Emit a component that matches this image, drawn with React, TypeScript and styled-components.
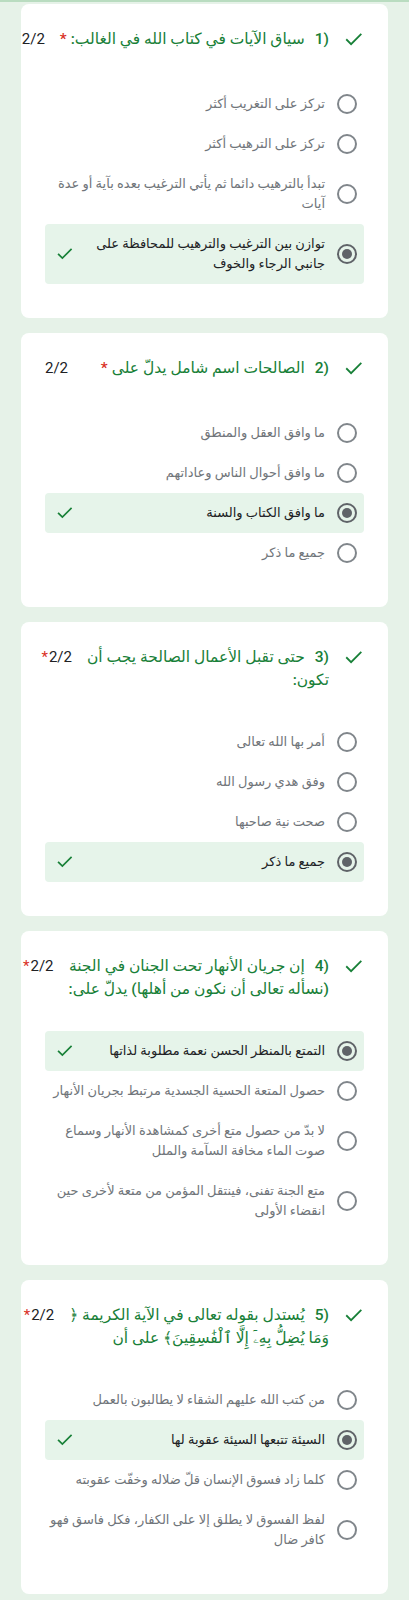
import React, {FC} from 'react';
import styled, {createGlobalStyle} from 'styled-components';

interface Option {
  lines: string[];
  selected?: boolean;
}

interface Question {
  n: number;
  title: string[];
  starWithPoints?: boolean;
  options: Option[];
}

const GlobalStyle = createGlobalStyle`
  html, body {
    margin: 0;
    padding: 0;
    background: #e6f2e8;
    overflow: hidden;
  }
  body {
    font-family: Roboto, "Noto Sans", "DejaVu Sans", sans-serif;
  }
`;

const Page = styled.div`
  direction: rtl;
  border-top: 2px solid #b9dcc0;
  padding: 2px 21px 0;
  display: flex;
  flex-direction: column;
  gap: 15px;
`;

const Card = styled.section`
  background: #fff;
  border-radius: 8px;
  padding: 24px 24px 34px;
`;

const Header = styled.div`
  display: flex;
  align-items: flex-start;
  gap: 15px;
  min-height: 26px;
  margin-bottom: 30px;
`;

const HeaderCheck = styled.svg`
  flex: none;
  width: 20px;
  height: 23px;
`;

const Title = styled.div`
  flex: 1;
  font-size: 15.5px;
  line-height: 23px;
  font-weight: 500;
  color: #188038;
  white-space: nowrap;
`;

const Num = styled.span`
  direction: ltr;
  unicode-bidi: isolate;
  display: inline-block;
  margin-left: 10px;
  font-weight: 500;
`;

const Star = styled.span`
  color: #d93025;
  margin-right: 4px;
`;

const Points = styled.div`
  flex: none;
  font-size: 15px;
  line-height: 23px;
  color: #202124;
  direction: ltr;
  white-space: nowrap;
`;

const PointsStar = styled.span`
  color: #d93025;
  margin-right: 1px;
`;

const Row = styled.div<{$selected?: boolean}>`
  display: flex;
  align-items: center;
  gap: 12px;
  padding: 10px 7px 10px 11px;
  border-radius: 4px;
  background: ${p => (p.$selected ? '#e6f4ea' : 'transparent')};
`;

const Radio = styled.span<{$selected?: boolean}>`
  flex: none;
  width: 20px;
  height: 20px;
  box-sizing: border-box;
  border-radius: 50%;
  border: 2px solid ${p => (p.$selected ? '#5f6368' : '#80868b')};
  display: flex;
  align-items: center;
  justify-content: center;

  &::after {
    content: '';
    display: ${p => (p.$selected ? 'block' : 'none')};
    width: 10px;
    height: 10px;
    border-radius: 50%;
    background: #5f6368;
  }
`;

const Label = styled.div<{$selected?: boolean}>`
  flex: 1;
  font-size: 13px;
  line-height: 20px;
  color: ${p => (p.$selected ? '#202124' : '#70757a')};
  white-space: nowrap;
`;

const RowCheck = styled.svg`
  flex: none;
  width: 18px;
  height: 18px;
`;

const Check: FC<{as?: 'header' | 'row'}> = ({as}) => {
  const path = <path d="M3.5 12.5l5 5L20 6" fill="none" stroke="#188038" strokeWidth="2.2" strokeLinecap="square" />;
  return as === 'row' ? (
    <RowCheck viewBox="0 0 24 24">{path}</RowCheck>
  ) : (
    <HeaderCheck viewBox="0 0 24 24">{path}</HeaderCheck>
  );
};

const questions: Question[] = [
  {
    n: 1,
    title: ['سياق الآيات في كتاب الله في الغالب:'],
    options: [
      {lines: ['تركز على التغريب أكثر']},
      {lines: ['تركز على الترهيب أكثر']},
      {lines: ['تبدأ بالترهيب دائما ثم يأتي الترغيب بعده بآية أو عدة', 'آيات']},
      {lines: ['توازن بين الترغيب والترهيب للمحافظة على', 'جانبي الرجاء والخوف'], selected: true},
    ],
  },
  {
    n: 2,
    title: ['الصالحات اسم شامل يدلّ على'],
    options: [
      {lines: ['ما وافق العقل والمنطق']},
      {lines: ['ما وافق أحوال الناس وعاداتهم']},
      {lines: ['ما وافق الكتاب والسنة'], selected: true},
      {lines: ['جميع ما ذكر']},
    ],
  },
  {
    n: 3,
    title: ['حتى تقبل الأعمال الصالحة يجب أن', 'تكون:'],
    starWithPoints: true,
    options: [
      {lines: ['أمر بها الله تعالى']},
      {lines: ['وفق هدي رسول الله']},
      {lines: ['صحت نية صاحبها']},
      {lines: ['جميع ما ذكر'], selected: true},
    ],
  },
  {
    n: 4,
    title: ['إن جريان الأنهار تحت الجنان في الجنة', '(نسأله تعالى أن نكون من أهلها) يدلّ على:'],
    starWithPoints: true,
    options: [
      {lines: ['التمتع بالمنظر الحسن نعمة مطلوبة لذاتها'], selected: true},
      {lines: ['حصول المتعة الحسية الجسدية مرتبط بجريان الأنهار']},
      {lines: ['لا بدّ من حصول متع أخرى كمشاهدة الأنهار وسماع', 'صوت الماء مخافة السآمة والملل']},
      {lines: ['متع الجنة تفنى، فينتقل المؤمن من متعة لأخرى حين', 'انقضاء الأولى']},
    ],
  },
  {
    n: 5,
    title: ['يُستدل بقوله تعالى في الآية الكريمة ﴿', 'وَمَا يُضِلُّ بِهِۦٓ إِلَّا ٱلْفَٰسِقِينَ﴾ على أن'],
    starWithPoints: true,
    options: [
      {lines: ['من كتب الله عليهم الشقاء لا يطالبون بالعمل']},
      {lines: ['السيئة تتبعها السيئة عقوبة لها'], selected: true},
      {lines: ['كلما زاد فسوق الإنسان قلّ ضلاله وخفّت عقوبته']},
      {lines: ['لفظ الفسوق لا يطلق إلا على الكفار، فكل فاسق فهو', 'كافر ضال']},
    ],
  },
];

const withBreaks = (lines: string[]) =>
  lines.map((line, i) => (
    <React.Fragment key={i}>
      {i > 0 && <br />}
      {line}
    </React.Fragment>
  ));

const QuestionCard: FC<{q: Question}> = ({q}) => (
  <Card>
    <Header>
      <Check />
      <Title>
        <Num>{q.n})</Num>
        {withBreaks(q.title)}
        {!q.starWithPoints && <Star>*</Star>}
      </Title>
      <Points>
        {q.starWithPoints && <PointsStar>*</PointsStar>}
        2/2
      </Points>
    </Header>
    {q.options.map((o, i) => (
      <Row key={i} $selected={o.selected}>
        <Radio $selected={o.selected} />
        <Label $selected={o.selected}>{withBreaks(o.lines)}</Label>
        {o.selected && <Check as="row" />}
      </Row>
    ))}
  </Card>
);

const App: FC = () => (
  <>
    <GlobalStyle />
    <Page>
      {questions.map(q => (
        <QuestionCard key={q.n} q={q} />
      ))}
    </Page>
  </>
);

export default App;
